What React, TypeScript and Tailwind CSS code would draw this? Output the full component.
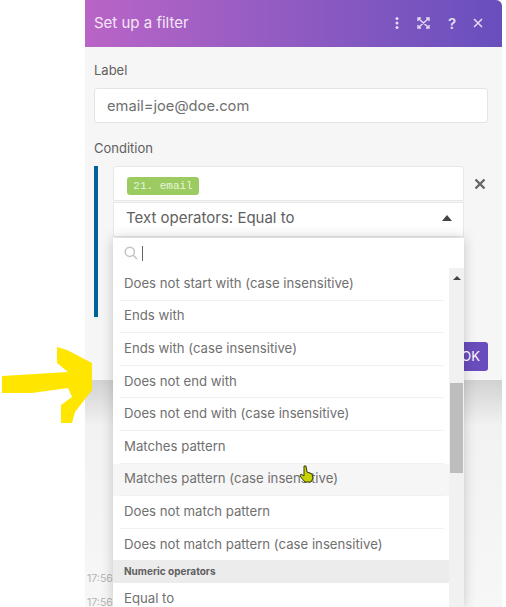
const operators = [
  "Does not start with (case insensitive)",
  "Ends with",
  "Ends with (case insensitive)",
  "Does not end with",
  "Does not end with (case insensitive)",
  "Matches pattern",
  "Matches pattern (case insensitive)",
  "Does not match pattern",
  "Does not match pattern (case insensitive)",
];

const App = () => {
  return (
    <div className="relative w-[506px] h-[607px] overflow-hidden bg-white font-['Inter',sans-serif] text-[#606060]">
      <div className="ml-[85px] w-[417px] flex flex-col h-full">
        {/* modal */}
        <div className="h-[380px] shrink-0 bg-[#f6f6f6] flex flex-col">
          <div className="h-[47px] shrink-0 rounded-tr-md bg-gradient-to-r from-[#b964c6] to-[#674fbd] flex items-center pl-[9px] pr-[19px] pb-[1px] text-white">
            <span className="text-[15px] text-[#f3e6f6]">Set up a filter</span>
            <div className="ml-auto flex items-center text-[#e6dcf2]">
              <svg width="4" height="12" viewBox="0 0 4 12" fill="currentColor">
                <circle cx="2" cy="1.6" r="1.5" />
                <circle cx="2" cy="6" r="1.5" />
                <circle cx="2" cy="10.4" r="1.5" />
              </svg>
              <svg className="ml-[18px]" width="13" height="12" viewBox="0 0 13 12" fill="none" stroke="currentColor" strokeWidth="1.4">
                <path d="M1 4V1h3M9 1h3v3M12 8v3H9M4 11H1V8M2 2l9 8M11 2l-9 8" />
              </svg>
              <span className="ml-[17px] text-[15px] font-semibold leading-none w-[10px] text-center">?</span>
              <svg className="ml-[16px]" width="10" height="10" viewBox="0 0 10 10" fill="none" stroke="currentColor" strokeWidth="1.5">
                <path d="M1 1l8 8M9 1l-8 8" />
              </svg>
            </div>
          </div>
          <div className="pl-[9px] pr-[14px] flex flex-col flex-1">
            <label className="mt-[15px] text-[13px] leading-[16px]">Label</label>
            <div className="mt-[10px] h-[35px] bg-white border border-[#e4e4e4] rounded-[3px] flex items-center pl-[12px] pt-[1px] text-[14.7px] text-[#707070]">
              email=joe@doe.com
            </div>
            <label className="mt-[17px] text-[13px] leading-[16px]">Condition</label>
            <div className="mt-[10px] flex">
              <div className="w-[4px] h-[151px] bg-[#00609c]" />
              <div className="ml-[15px] w-[351px] flex flex-col gap-[1px]">
                <div className="h-[35px] bg-white border border-[#e8e8e8] rounded-t-[3px] flex pl-[13px] pt-[10px]">
                  <span className="h-[18px] w-[72px] rounded-[3px] bg-[#9ccb62] text-[#e8f5d8] font-['Liberation_Mono',monospace] text-[11px] flex items-center justify-center">
                    21. email
                  </span>
                </div>
                <div className="h-[35px] bg-white border border-[#e8e8e8] flex items-center pl-[12px] pr-[11px] pb-[3px] text-[15px] text-[#606060]">
                  Text operators: Equal to
                  <svg className="ml-auto" width="10" height="6" viewBox="0 0 10 6" fill="#444">
                    <path d="M5 0l5 6H0z" />
                  </svg>
                </div>
              </div>
              <svg className="ml-[10px] mt-[12px]" width="12" height="12" viewBox="0 0 12 12" fill="none" stroke="#666" strokeWidth="2.4">
                <path d="M1.5 1.5l9 9M10.5 1.5l-9 9" />
              </svg>
            </div>
            <div className="mt-auto mb-[9px] self-end h-[29px] w-[60px] bg-[#6a4dbd] rounded-[3px] flex items-center justify-end pr-[8px] text-[13px] text-white">
              OK
            </div>
          </div>
        </div>
        {/* log behind the modal */}
        <div className="flex-1 relative bg-gradient-to-b from-[#d2d2d2] via-[#f2f2f2] via-20% to-[#f7f7f7]">
          <div className="pt-[192px] pl-[2px] flex flex-col gap-[10px] text-[10.5px] leading-[14px] text-[#b4b4b4]">
            <span>17:56</span>
            <span>17:56</span>
          </div>
        </div>
      </div>

      {/* open dropdown of the select, lies over the modal */}
      <div className="absolute left-[113px] top-[238px] w-[351px] h-[369px] flex flex-col bg-white shadow-[0_0_12px_rgba(0,0,0,0.2)]">
        <div className="h-[30px] shrink-0 flex items-center pl-[11px]">
          <svg width="14" height="14" viewBox="0 0 14 14" fill="none" stroke="#c4c4c4" strokeWidth="1.5">
            <circle cx="5.8" cy="5.8" r="4.6" />
            <path d="M9.2 9.2L13 13" />
          </svg>
          <span className="ml-[4px] w-px h-[15px] bg-[#666]" />
        </div>
        <div className="flex-1 flex min-h-0">
          <div className="flex-1 min-w-0">
            {operators.map((item) => (
              <div
                key={item}
                className={`h-[32.6px] pl-[7px] pr-[5px] ${
                  item === "Matches pattern (case insensitive)" ? "bg-[#f6f6f6]" : ""
                }`}
              >
                <div className="h-full pl-[4px] flex items-center border-b border-[#f1f1f1] text-[13.2px] text-[#707070]">
                  {item}
                </div>
              </div>
            ))}
            <div className="mt-[-1px] h-[23px] flex items-center pl-[11px] bg-[#ececec] text-[10px] font-bold text-[#606060]">
              Numeric operators
            </div>
            <div className="h-[32px] pl-[11px] flex items-center text-[13.2px] text-[#707070]">Equal to</div>
          </div>
          <div className="w-[15px] shrink-0 bg-[#f1f1f1] flex flex-col items-center">
            <svg className="mt-[8px]" width="8" height="4" viewBox="0 0 8 4" fill="#444">
              <path d="M4 0l4 4H0z" />
            </svg>
            <div className="mt-[103px] w-[13px] h-[90px] bg-[#bdbdbd]" />
          </div>
        </div>
      </div>

      {/* yellow arrow drawn over the recording */}
      <svg className="absolute left-0 top-[340px]" width="100" height="90" viewBox="0 0 100 90" fill="#ffe600">
        <path d="M2 36L68 32L57 23L57 7L67 10L92 23L92 50L75 72L72 83L61 83L61 65L72 57L68 48L32 53L2 53Z" />
      </svg>

      {/* hand cursor */}
      <svg className="absolute left-[299px] top-[465px]" width="15" height="18" viewBox="0 0 15 18">
        <path d="M5 1h2l1 6 5 2 1 4-2 4H6L1 11l1-2 3 2z" fill="#c9d400" stroke="#3a3a10" strokeWidth="1" />
      </svg>
    </div>
  );
};

export default App;
